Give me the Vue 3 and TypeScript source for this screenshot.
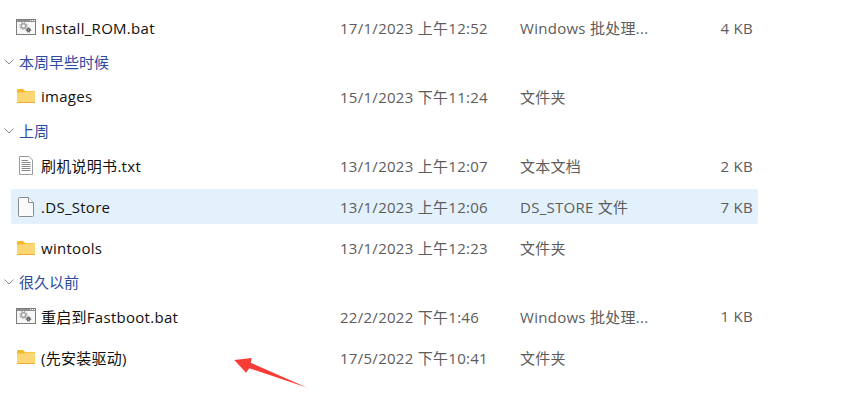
<template>
  <div class="list">
    <template v-for="item in items" :key="item.name">
      <div v-if="item.kind === 'group'" class="group" :class="{ tall: item.tall }">
        <svg class="chevron" width="10" height="6" viewBox="0 0 10 6">
          <path d="M0.5 0.5 L5 5 L9.5 0.5" fill="none" stroke="#8c8c8c" stroke-width="1" />
        </svg>
        <span>{{ item.name }}</span>
      </div>
      <div v-else class="row" :class="{ selected: item.selected }">
        <span class="icon">
          <svg v-if="item.kind === 'bat'" width="20" height="17" viewBox="0 0 20 17">
            <rect x="0.5" y="0.5" width="19" height="15" fill="#f7f7f7" stroke="#7d7d7d" />
            <rect x="1" y="1" width="18" height="2" fill="#8f8f8f" />
            <path d="M14 1.5h1M16 1.5h1M18 1.5h1" stroke="#fff" />
            <circle cx="7.5" cy="7" r="2.2" fill="#fff" stroke="#a4a4a4" stroke-width="1.6" />
            <circle cx="7.5" cy="7" r="3.5" fill="none" stroke="#a4a4a4" stroke-width="1.2" stroke-dasharray="1.4 1.35" />
            <circle cx="12.5" cy="11" r="1.3" fill="#e8e8e8" stroke="#5a5a5a" stroke-width="1.4" />
            <circle cx="12.5" cy="11" r="2.3" fill="none" stroke="#5a5a5a" stroke-width="0.9" stroke-dasharray="1 0.8" />
          </svg>
          <svg v-else-if="item.kind === 'folder'" width="18" height="14" viewBox="0 0 18 14">
            <path d="M0 1.2 Q0 0 1.2 0 H6 L8 2 H18 V4 H0Z" fill="#f5b72b" />
            <path d="M0 3.5 H7 L8.5 2.5 H18 V13 Q18 14 17 14 H1 Q0 14 0 13Z" fill="#fcd672" />
            <path d="M0 13 H18 Q18 14 17 14 H1 Q0 14 0 13Z" fill="#eeb02c" />
          </svg>
          <svg v-else-if="item.kind === 'txt'" width="14" height="19" viewBox="0 0 14 19">
            <path d="M0.5 0.5 H10 L13.5 4 V18.5 H0.5Z" fill="#fff" stroke="#9a9a9a" />
            <path d="M2.5 4.5H9M2.5 6.5H11.5M2.5 8.5H11.5M2.5 10.5H11.5M2.5 12.5H11.5M2.5 14.5H11.5" stroke="#8a8a8a" />
          </svg>
          <svg v-else width="16" height="20" viewBox="0 0 16 20">
            <path d="M0.5 1.5 Q0.5 0.5 1.5 0.5 H10.5 L15.5 5.5 V18.5 Q15.5 19.5 14.5 19.5 H1.5 Q0.5 19.5 0.5 18.5Z" fill="#fafafa" stroke="#8a8a8a" />
            <path d="M10.5 0.5 V5.5 H15.5" fill="#fff" stroke="#8a8a8a" />
          </svg>
        </span>
        <span class="name">{{ item.name }}</span>
        <span class="date">{{ item.date }}</span>
        <span class="type">{{ item.type }}</span>
        <span class="size">{{ item.size }}</span>
      </div>
    </template>
    <svg class="arrow" width="74" height="32" viewBox="0 0 74 32">
      <path d="M0.3 4 L17.7 2 L16.7 6.7 L73.3 31.7 L15.3 12.3 L12 16.7Z" fill="#fa3c36" />
    </svg>
  </div>
</template>

<script setup lang="ts">
type Item = {
  kind: 'group' | 'bat' | 'folder' | 'txt' | 'file'
  name: string
  date?: string
  type?: string
  size?: string
  selected?: boolean
  tall?: boolean
}

const items: Item[] = [
  { kind: 'bat', name: 'Install_ROM.bat', date: '17/1/2023 上午12:52', type: 'Windows 批处理...', size: '4 KB' },
  { kind: 'group', name: '本周早些时候' },
  { kind: 'folder', name: 'images', date: '15/1/2023 下午11:24', type: '文件夹' },
  { kind: 'group', name: '上周', tall: true },
  { kind: 'txt', name: '刷机说明书.txt', date: '13/1/2023 上午12:07', type: '文本文档', size: '2 KB' },
  { kind: 'file', name: '.DS_Store', date: '13/1/2023 上午12:06', type: 'DS_STORE 文件', size: '7 KB', selected: true },
  { kind: 'folder', name: 'wintools', date: '13/1/2023 上午12:23', type: '文件夹' },
  { kind: 'group', name: '很久以前' },
  { kind: 'bat', name: '重启到Fastboot.bat', date: '22/2/2022 下午1:46', type: 'Windows 批处理...', size: '1 KB' },
  { kind: 'folder', name: '(先安装驱动)', date: '17/5/2022 下午10:41', type: '文件夹' },
]
</script>

<style>
html,
body {
  background: #fff;
}
</style>

<style scoped>
.list {
  position: relative;
  width: 854px;
  height: 404px;
  overflow: hidden;
  box-sizing: border-box;
  padding-top: 10px;
  font-family: 'Open Sans', 'Noto Sans CJK SC', sans-serif;
  font-size: 15px;
  color: #111;
}
.group {
  display: flex;
  align-items: center;
  height: 33.5px;
  margin-left: 4px;
  color: #2b4aa0;
}
.group.tall {
  height: 34.5px;
}
.chevron {
  margin-right: 5px;
}
.row {
  display: flex;
  align-items: center;
  width: 747px;
  height: 35px;
  margin-left: 11px;
  border-radius: 2px;
}
.row + .row {
  margin-top: 6px;
}
.selected {
  background: #e3f1fd;
}
.icon {
  display: flex;
  justify-content: center;
  width: 30px;
  flex: none;
}
.name,
.date,
.type,
.size {
  flex: none;
  letter-spacing: 0.28px;
}
.name {
  width: 299px;
}
.date {
  width: 180px;
  color: #5c5c5c;
}
.type {
  width: 183px;
  color: #5c5c5c;
}
.size {
  width: 50px;
  text-align: right;
  color: #5c5c5c;
}
.arrow {
  position: absolute;
  left: 234px;
  top: 356px;
}
</style>
